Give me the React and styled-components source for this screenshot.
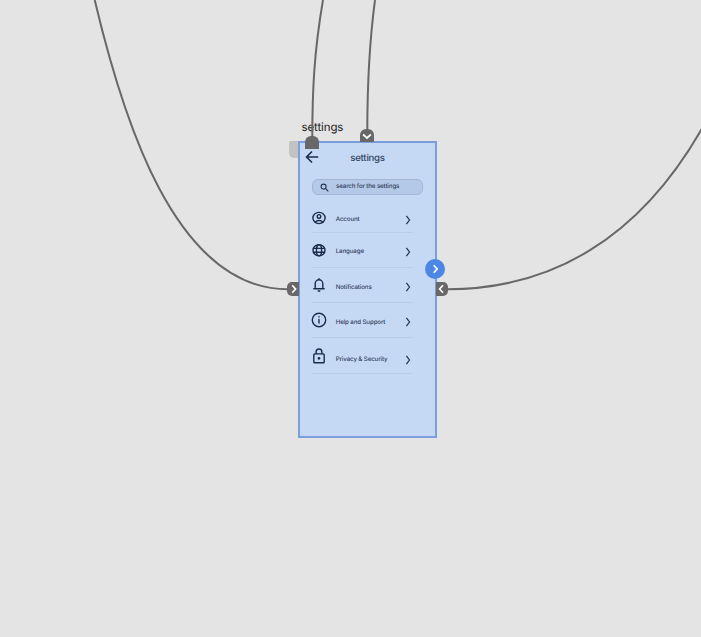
import React from "react";
import styled, { createGlobalStyle } from "styled-components";

const Global = createGlobalStyle`
  body {
    margin: 0;
    background: #e4e4e4;
    font-family: Inter, "Liberation Sans", sans-serif;
    text-rendering: geometricPrecision;
  }
`;

const Canvas = styled.main`
  position: relative;
  width: 701px;
  height: 637px;
  overflow: hidden;
  background: #e4e4e4;
`;

const Connectors = styled.svg`
  position: absolute;
  inset: 0;
  fill: none;
  stroke: #686868;
  stroke-width: 2;
`;

const FrameLabel = styled.div`
  position: absolute;
  left: 301.5px;
  top: 120px;
  font-size: 11.5px;
  line-height: 14px;
  letter-spacing: -0.12px;
  color: #1b1b1b;
`;

const FlowTab = styled.div`
  position: absolute;
  left: 288.5px;
  top: 141px;
  width: 12px;
  height: 17px;
  border-radius: 2px 0 0 5px;
  background: #c2c2c2;
`;

const Phone = styled.section`
  position: absolute;
  left: 298px;
  top: 141px;
  width: 139px;
  height: 297px;
  box-sizing: border-box;
  border: 2px solid #7a9fdc;
  background: #c5d9f5;
  color: #33435e;
  display: flex;
  flex-direction: column;
`;

const Header = styled.header`
  height: 36px;
  display: grid;
  grid-template-columns: 25px 1fr 25px;
  align-items: center;
  box-sizing: border-box;
  padding-bottom: 5px;
`;

const BackIcon = styled.svg`
  width: 14px;
  height: 14px;
  margin: 0 0 3px 5px;
  fill: none;
  stroke: #1b2c49;
  stroke-width: 1.6;
`;

const Title = styled.h1`
  margin: 0;
  text-align: center;
  font-size: 9.6px;
  letter-spacing: -0.25px;
  font-weight: 500;
  line-height: 12px;
  color: #33435e;
`;

const Search = styled.div`
  box-sizing: border-box;
  width: 111px;
  height: 16px;
  margin-left: 12px;
  border: 1px solid #a3b7d5;
  border-radius: 6px;
  background: #b4c9e7;
  display: flex;
  align-items: center;
  padding-left: 7px;
  gap: 7px;
  font-size: 6.2px;
  letter-spacing: -0.13px;
  font-weight: 500;
  line-height: 8px;
  white-space: nowrap;
`;

const SearchIcon = styled.svg`
  width: 9px;
  height: 9px;
  flex: none;
  fill: none;
  stroke: #263650;
  stroke-width: 1.1;
`;

const List = styled.ul`
  list-style: none;
  margin: 11px 0 0 11px;
  padding: 0 0 0 1px;
  width: 101px;
`;

const Row = styled.li`
  box-sizing: border-box;
  height: ${(p) => p.$height}px;
  border-bottom: 1px solid #bacee9;
  display: grid;
  grid-template-columns: 23.7px 1fr 10px;
  align-items: center;
`;

const RowIcon = styled.svg`
  width: 16px;
  height: 16px;
  margin-left: -0.7px;
  margin-bottom: ${(p) => p.$lift}px;
  fill: none;
  stroke: #1b2c49;
  stroke-width: 1.4;
  stroke-linecap: round;
  stroke-linejoin: round;
`;

const Label = styled.span`
  font-size: 6.2px;
  letter-spacing: -0.13px;
  font-weight: 500;
  line-height: 8px;
  white-space: nowrap;
  padding-top: ${(p) => p.$drop + 1}px;
`;

const Chevron = styled.svg`
  width: 6px;
  height: 10px;
  margin-top: ${(p) => p.$drop}px;
  margin-left: 1.7px;
  fill: none;
  stroke: #263650;
  stroke-width: 1.25;
`;

const Port = styled.div`
  position: absolute;
  left: ${(p) => p.$x}px;
  top: ${(p) => p.$y}px;
  width: ${(p) => p.$w}px;
  height: ${(p) => p.$h}px;
  border-radius: ${(p) => p.$radius};
  background: ${(p) => p.$fill || "#686868"};
  display: flex;
  align-items: center;
  justify-content: center;

  svg {
    width: 10px;
    height: 10px;
    flex: none;
    fill: none;
    stroke: #fff;
    stroke-width: 1.7;
  }
`;

const icons = {
  account: (
    <>
      <ellipse cx="8" cy="8" rx="6.1" ry="5.6" />
      <circle cx="8" cy="6.4" r="1.8" />
      <path d="M4.2 12c1.8-2 5.8-2 7.6 0" />
    </>
  ),
  language: (
    <>
      <ellipse cx="8" cy="8.3" rx="6" ry="5.6" />
      <ellipse cx="8" cy="8.3" rx="2.6" ry="5.6" />
      <path d="M2.5 6.4h11M2.5 10.2h11" />
    </>
  ),
  bell: (
    <>
      <path d="M2.8 11.8h10.4M4.2 11.6V6.6a3.8 3.8 0 0 1 7.6 0v5M8 2.6V1.6" />
      <path d="M7.2 14h1.6" />
    </>
  ),
  info: (
    <>
      <circle cx="8" cy="8" r="6.7" />
      <path d="M8 7.5v3.6M8 4.8v.2" />
    </>
  ),
  lock: (
    <>
      <rect x="2.8" y="5.9" width="10.4" height="8.8" rx=".8" />
      <path d="M5.1 5.7V3.9a2.9 2.9 0 0 1 5.8 0v1.8" />
      <circle cx="8" cy="10.3" r=".7" />
    </>
  ),
};

const items = [
  { icon: "account", label: "Account", height: 27, lift: 2, drop: 1 },
  { icon: "language", label: "Language", height: 35, lift: 0, drop: 3 },
  { icon: "bell", label: "Notifications", height: 35, lift: 1, drop: 4 },
  { icon: "info", label: "Help and Support", height: 35, lift: 1, drop: 4 },
  { icon: "lock", label: "Privacy & Security", height: 36, lift: 0, drop: 8 },
];

const Arrow = ({ d }) => (
  <svg viewBox="0 0 10 10">
    <path d={d} />
  </svg>
);

export default function App() {
  return (
    <>
      <Global />
      <Canvas>
        <FlowTab />
        <FrameLabel>settings</FrameLabel>
        <Phone>
          <Header>
            <BackIcon viewBox="0 0 14 14">
              <path d="M13.2 7H1.7M7 1.5 1.5 7 7 12.5" />
            </BackIcon>
            <Title>settings</Title>
          </Header>
          <Search>
            <SearchIcon viewBox="0 0 9 9">
              <circle cx="3.6" cy="3.6" r="2.5" />
              <path d="m5.5 5.5 2.8 2.8" />
            </SearchIcon>
            search for the settings
          </Search>
          <List>
            {items.map((item) => (
              <Row key={item.label} $height={item.height}>
                <RowIcon viewBox="0 0 16 16" $lift={item.lift}>
                  {icons[item.icon]}
                </RowIcon>
                <Label $drop={item.drop}>{item.label}</Label>
                <Chevron viewBox="0 0 6 10" $drop={item.drop}>
                  <path d="M1.4 .8 4.5 5 1.4 9.2" />
                </Chevron>
              </Row>
            ))}
          </List>
        </Phone>
        <Connectors width="701" height="637">
          <path d="M94.7 0C122 115 174 289.3 288 289.3" />
          <path d="M447 289.3C550 289.3 638.3 240 702 128.5" />
          <path d="M323 0C314 52 312.3 92 312.3 138" />
          <path d="M375 0C369 45 367.3 90 367.3 132" />
        </Connectors>
        <Port $x={305.3} $y={136} $w={14} $h={13} $radius="6px 6px 0 0" />
        <Port $x={360.3} $y={129} $w={14} $h={13} $radius="6px 6px 0 0">
          <Arrow d="M1.1 3.5 5 7l3.9-3.5" />
        </Port>
        <Port $x={287} $y={282} $w={12} $h={14} $radius="5px 0 0 5px">
          <Arrow d="m4.2 1.2 3.4 3.8-3.4 3.8" />
        </Port>
        <Port $x={436} $y={282} $w={12} $h={14} $radius="0 5px 5px 0">
          <Arrow d="M6 1.2 2.6 5 6 8.8" />
        </Port>
        <Port $x={425.3} $y={259.3} $w={20} $h={20} $radius="50%" $fill="#4c87e3">
          <Arrow d="m3.7 1.2 3.4 3.8-3.4 3.8" />
        </Port>
      </Canvas>
    </>
  );
}
